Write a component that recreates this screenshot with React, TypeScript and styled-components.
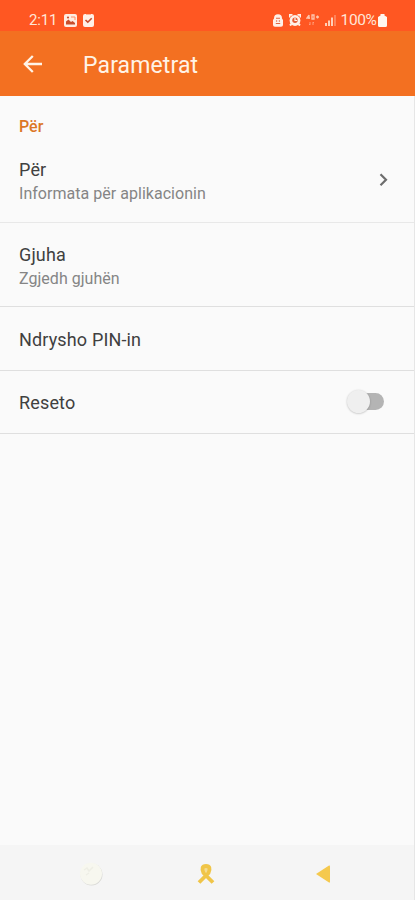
import React from 'react';
import styled, { createGlobalStyle } from 'styled-components';

const GlobalStyle = createGlobalStyle`
  * { box-sizing: border-box; }
  body { margin: 0; background: #fafafa; font-family: Roboto, sans-serif; }
`;

const Screen = styled.div`
  width: 415px;
  height: 900px;
  display: flex;
  flex-direction: column;
  background: #fafafa;
  overflow: hidden;
`;

const Body = styled.main`
  flex: 1;
  border-right: 1px solid #e6e6e6;
`;

const StatusBar = styled.div`
  height: 31px;
  flex: none;
  display: flex;
  align-items: center;
  padding: 10px 28px 1px 29px;
  background: #ff5722;
  color: #ffe6d8;
`;

const StatusText = styled.span<{ $size: number; $spacing?: number }>`
  font-size: ${(p) => p.$size}px;
  line-height: 20px;
  letter-spacing: ${(p) => p.$spacing ?? 0}px;
`;

const StatusGroup = styled.div<{ $gap: number; $left: string }>`
  display: flex;
  align-items: center;
  gap: ${(p) => p.$gap}px;
  margin-left: ${(p) => p.$left};
`;

const AppBar = styled.header`
  height: 65px;
  flex: none;
  display: flex;
  align-items: center;
  padding: 2px 0 0 21px;
  background: #f37021;
  color: #fff3e6;
`;

const BackButton = styled.button`
  border: 0;
  padding: 0;
  width: 24px;
  height: 24px;
  background: none;
  color: inherit;
`;

const AppTitle = styled.h1`
  margin: 2px 0 0 38px;
  font-size: 23px;
  font-weight: 400;
  line-height: 28px;
  letter-spacing: 0.12px;
`;

const SectionTitle = styled.h2`
  margin: 0;
  height: 49px;
  padding: 20px 19px 0;
  font-size: 16px;
  font-weight: 500;
  line-height: 22px;
  color: #dc7726;
`;

const Row = styled.div<{ $height: number; $top: number; $line?: string }>`
  height: ${(p) => p.$height}px;
  display: flex;
  justify-content: space-between;
  padding: ${(p) => p.$top}px 0 0 19px;
  border-bottom: 1px solid ${(p) => p.$line ?? '#dfdfdf'};
`;

const RowText = styled.div`
  display: flex;
  flex-direction: column;
`;

const RowTitle = styled.span`
  font-size: 18px;
  line-height: 24px;
  letter-spacing: 0.15px;
  color: #404040;
`;

const RowNote = styled.span`
  font-size: 16px;
  line-height: 24px;
  letter-spacing: 0.03px;
  color: #858585;
`;

const Chevron = styled.svg`
  margin: 14px 24px 0 0;
  width: 12px;
  height: 16px;
`;

const Switch = styled.button`
  display: flex;
  align-items: center;
  border: 0;
  padding: 0;
  margin: 2px 30px 0 0;
  width: 31px;
  height: 17px;
  border-radius: 9px;
  background: #b4b4b4;
`;

const Thumb = styled.span`
  flex: none;
  width: 23px;
  height: 23px;
  margin-left: -6px;
  border-radius: 50%;
  background: #efefef;
  box-shadow: 0 0.5px 2px rgba(0, 0, 0, 0.25);
`;

const NavBar = styled.nav`
  height: 55px;
  flex: none;
  display: grid;
  grid-template-columns: 103px 204px 1fr;
  align-items: center;
  background: #f5f5f5;
  padding-top: 3px;
  border-right: 1px solid #e6e6e6;
`;

const NavItem = styled.div<{ $shift: number }>`
  display: flex;
  justify-content: flex-end;
  padding-right: ${(p) => p.$shift}px;
`;

export default function App() {
  return (
    <>
      <GlobalStyle />
      <Screen>
        <StatusBar>
          <StatusText $size={15} $spacing={-0.2}>2:11</StatusText>
          <StatusGroup $gap={6} $left="7px">
            <svg width="13" height="13" viewBox="0 0 13 13">
              <rect width="13" height="13" rx="2" fill="#ffece1" />
              <path d="M2 10.5V7.5L4.5 5.5L7 8L8.5 7L11 9V10.5Z" fill="#c94e2c" />
              <circle cx="4" cy="3.5" r="1.1" fill="#c94e2c" />
              <path d="M7 3H11V6" fill="none" stroke="#ff8b65" />
            </svg>
            <svg width="11" height="13" viewBox="0 0 11 13">
              <rect width="11" height="13" rx="2" fill="#fff0e8" />
              <path d="M2.5 6L4.8 8.2L8.7 4.2" fill="none" stroke="#c64b2d" strokeWidth="1.6" />
              <path d="M3 .5H8" stroke="#ffb395" />
            </svg>
          </StatusGroup>
          <StatusGroup $gap={5.5} $left="auto">
            <svg width="10" height="13" viewBox="0 0 10 13">
              <path d="M1 4.5Q1 .3 5 .3T9 4.5L10 6V11Q10 12.7 8 12.7H2Q0 12.7 0 11V6Z" fill="#fff0e8" />
              <path d="M3 4.2H7M2.8 9.5H7.2" stroke="#df6544" strokeWidth="1.1" />
              <circle cx="3.6" cy="7" r=".7" fill="#df6544" />
              <circle cx="6.4" cy="7" r=".7" fill="#df6544" />
            </svg>
            <svg width="12" height="12" viewBox="0 0 12 12">
              <circle cx="6" cy="6.5" r="5.4" fill="#fff0e8" />
              <path d="M.5 3.5V.8H3.5M8.5 .8H11.5V3.5M2.5 10L1 11.5M9.5 10L11 11.5" fill="none" stroke="#fff0e8" strokeWidth="2" />
              <circle cx="6" cy="6.3" r="2.7" fill="#e55d38" />
              <path d="M6 3.8V6.5H8.2" fill="none" stroke="#fff0e8" strokeWidth="1.2" />
            </svg>
            <svg width="13" height="13" viewBox="0 0 13 13">
              <path d="M3 1L1 4H4M3 1V5M6 1H8V5H6ZM10 3H13M11.5 1.5V4.5" fill="none" stroke="#ffc6ad" strokeWidth="1.3" />
              <path d="M4 8V11L3 10M7 11V8L8 9" fill="none" stroke="#ff9d78" />
            </svg>
            <svg width="11" height="12" viewBox="0 0 11 12">
              <path d="M1 12V9M4 12V6.5M7 12V3.5" stroke="#ffcfb8" strokeWidth="2" />
              <path d="M10 12V1" stroke="#ff9b77" strokeWidth="1.3" />
            </svg>
          </StatusGroup>
          <StatusGroup $gap={1.5} $left="5px">
            <StatusText $size={15.5} $spacing={-0.4}>100%</StatusText>
            <svg width="9" height="13" viewBox="0 0 9 13">
              <path d="M2.5 0H6.5V1.5L9 3V11.5Q9 13 7.5 13H1.5Q0 13 0 11.5V3L2.5 1.5Z" fill="#fff7ef" />
            </svg>
          </StatusGroup>
        </StatusBar>
        <AppBar>
          <BackButton aria-label="Prapa">
            <svg width="24" height="24" viewBox="0 0 24 24">
              <path d="M21 11H4M11.8 3L3.8 11L11.8 19" fill="none" stroke="currentColor" strokeWidth="2.3" />
            </svg>
          </BackButton>
          <AppTitle>Parametrat</AppTitle>
        </AppBar>
        <Body>
          <SectionTitle>Për</SectionTitle>
          <Row $height={78} $top={13} $line="#e8e8e8">
            <RowText>
              <RowTitle>Për</RowTitle>
              <RowNote>Informata për aplikacionin</RowNote>
            </RowText>
            <Chevron viewBox="0 0 12 16">
              <path d="M2.5 2.2L8 7.7L2.5 13.2" fill="none" stroke="#6d6d6d" strokeWidth="2.2" />
            </Chevron>
          </Row>
          <Row $height={84} $top={20}>
            <RowText>
              <RowTitle>Gjuha</RowTitle>
              <RowNote>Zgjedh gjuhën</RowNote>
            </RowText>
          </Row>
          <Row $height={64} $top={21}>
            <RowTitle>Ndrysho PIN-in</RowTitle>
          </Row>
          <Row $height={63} $top={20}>
            <RowTitle>Reseto</RowTitle>
            <Switch role="switch" aria-checked={false} aria-label="Reseto">
              <Thumb />
            </Switch>
          </Row>
        </Body>
        <NavBar>
          <NavItem $shift={0}>
            <svg width="26" height="26" viewBox="0 0 26 26">
              <circle cx="14.5" cy="13.5" r="11" fill="#d9d9d6" />
              <circle cx="14" cy="12.8" r="11" fill="#f7f7ef" />
              <path d="M7 9L10 7L12 10L16 6M9 14L12 12" fill="none" stroke="#eeeee5" strokeWidth="1.5" />
            </svg>
          </NavItem>
          <NavItem $shift={91}>
            <svg width="20" height="24" viewBox="0 0 20 24">
              <ellipse cx="10" cy="7.5" rx="3" ry="3.5" fill="#f5dc91" />
              <path d="M3 20.5L12.5 11Q15.5 4 10 4T7.5 11L17 20.5" fill="none" stroke="#f0c548" strokeWidth="3.8" />
            </svg>
          </NavItem>
          <NavItem $shift={83}>
            <svg width="16" height="20" viewBox="0 0 16 20">
              <path d="M1 10L14 1.5Q15 1 15 2.5V17.5Q15 19 14 18.5Z" fill="#f5c94e" />
            </svg>
          </NavItem>
        </NavBar>
      </Screen>
    </>
  );
}
